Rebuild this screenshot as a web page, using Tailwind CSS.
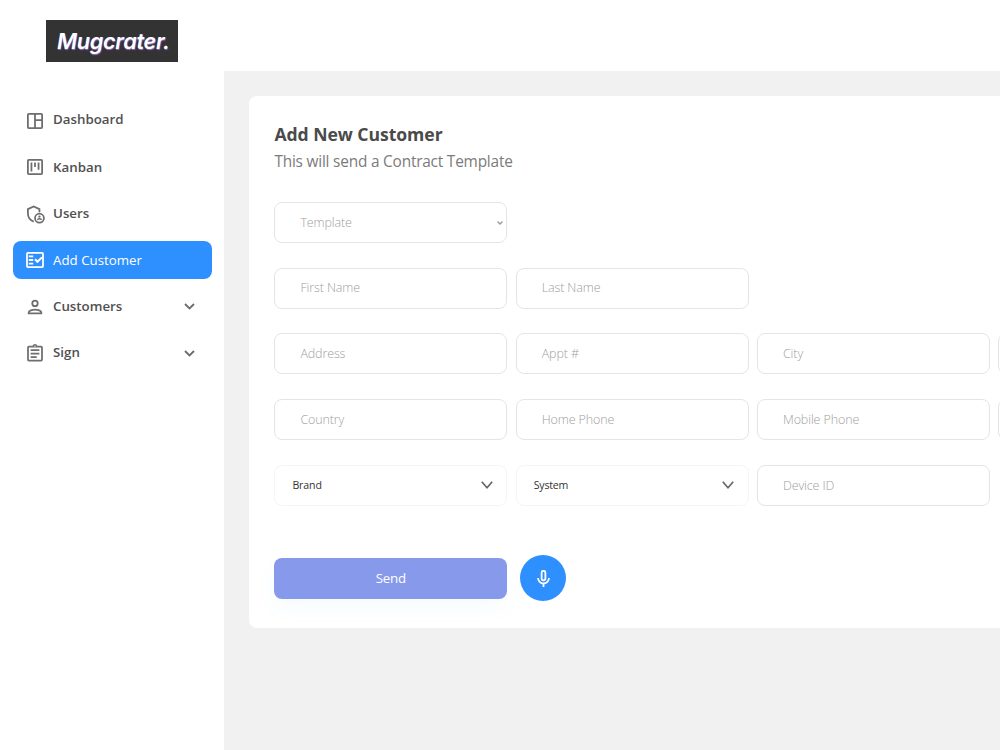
<!DOCTYPE html>
<html lang="en">
<head>
<meta charset="utf-8">
<title>Add Customer</title>
<script src="https://cdn.jsdelivr.net/npm/@tailwindcss/browser@4"></script>
</head>
<body class="w-[1000px] h-[750px] overflow-hidden bg-[#f1f1f1] font-['Open_Sans',sans-serif] text-[#505050]">
<div class="flex h-full overflow-hidden">
  <aside class="w-[224.4px] shrink-0 bg-white pl-[13px] pt-5">
    <div class="ml-[33px] flex h-[42px] w-[131.500px] items-center justify-center bg-[#333] pl-[3px] font-['Inter',sans-serif] text-[21.700px] font-semibold italic tracking-[-0.300px] text-white [font-feature-settings:'cv11'] [text-shadow:0.5px_1px_1px_#9b6cc9]"><span>Mugcrater.</span></div>
    <nav class="mt-[39.3px] flex w-[199.4px] flex-col gap-[9px] text-[13.300px] font-[580] leading-none">
      <a class="flex h-[37.6px] items-center pl-[14px]"><svg class="mt-[2px] size-[16px]" viewBox="3 3 18 18" fill="#6e6e6e"><path d="M19 3H5a2 2 0 0 0-2 2v14a2 2 0 0 0 2 2h14a2 2 0 0 0 2-2V5a2 2 0 0 0-2-2zM5 19V5h6v14H5zm14 0h-6v-7h6v7zm0-9h-6V5h6v5z"/></svg><span class="ml-[10px]">Dashboard</span></a>
      <a class="flex h-[37.6px] items-center pl-[14px]"><svg class="mt-px size-[16px]" viewBox="3 3 18 18" fill="#6e6e6e"><path d="M19 3H5a2 2 0 0 0-2 2v14a2 2 0 0 0 2 2h14a2 2 0 0 0 2-2V5a2 2 0 0 0-2-2zm0 16H5V5h14v14zM7 7h2v10H7zm4 0h2v5h-2zm4 0h2v8h-2z"/></svg><span class="ml-[10px] mt-[2px]">Kanban</span></a>
      <a class="flex h-[37.6px] items-center pl-[14px]"><svg class="mt-px size-[16px] overflow-visible" viewBox="3 3 18 18" fill="none" stroke="#6e6e6e" stroke-width="2"><path d="M10.500 20.500C6.500 19 4 15.500 4 11.200V6.500L10.500 3.500L17 6.500V10"/><circle cx="17" cy="16.700" r="5"/><circle cx="17" cy="15" r="1.300" fill="#6e6e6e" stroke="none"/><path d="M14.500 18.500c1.500-1.300 3.500-1.300 5 0" stroke-width="1.600"/></svg><span class="ml-[10px]">Users</span></a>
      <a class="flex h-[37.6px] items-center rounded-lg bg-[#2e90fe] pl-[13px] text-white"><svg class="mt-px h-[16px] w-[18px]" viewBox="2 3 20 18" fill="#fff"><path fill-rule="evenodd" d="M20 3H4a2 2 0 0 0-2 2v14a2 2 0 0 0 2 2h16a2 2 0 0 0 2-2V5a2 2 0 0 0-2-2zM4 5h16v14H4V5z"/><path d="M5 7h5v2H5zM5 11h5v2H5zM5 15h5v2H5z"/><path d="M12 11.200l2.800 2.800 5-5" fill="none" stroke="#fff" stroke-width="2.200"/></svg><span class="ml-[9px] mt-px font-medium">Add Customer</span></a>
      <a class="flex h-[37.6px] items-center pl-[13px]"><svg class="mt-px size-[18px]" viewBox="2 2 20 20" fill="none" stroke="#6e6e6e" stroke-width="2"><circle cx="12" cy="8" r="3"/><path d="M5 19v-1c0-2 4-3.100 7-3.100s7 1.100 7 3.100v1z"/></svg><span class="ml-[9px]">Customers</span><svg class="ml-auto mr-[17px] mt-px h-[7px] w-[11px]" viewBox="0 0 11 7" fill="none" stroke="#6e6e6e" stroke-width="1.900"><path d="M1 1l4.500 4.500L10 1"/></svg></a>
      <a class="flex h-[37.6px] items-center pl-[14px]"><svg class="h-[17.500px] w-[16px]" viewBox="3 1 18 20" fill="#6e6e6e"><path d="M19 3h-4.180a3 3 0 0 0-5.640 0H5a2 2 0 0 0-2 2v14a2 2 0 0 0 2 2h14a2 2 0 0 0 2-2V5a2 2 0 0 0-2-2zm-7-.250a.75.75 0 1 1 0 1.500.75.75 0 0 1 0-1.500zM19 19H5V5h14v14zM7 7h10v2H7zm0 4h10v2H7zm0 4h7v2H7z"/></svg><span class="-mt-px ml-[10px]">Sign</span><svg class="ml-auto mr-[17px] mt-px h-[7px] w-[11px]" viewBox="0 0 11 7" fill="none" stroke="#6e6e6e" stroke-width="1.900"><path d="M1 1l4.500 4.500L10 1"/></svg></a>
    </nav>
  </aside>
  <div class="min-w-0 flex-1 overflow-hidden">
    <header class="h-[71px] bg-white"></header>
    <main class="ml-[25px] mt-[25px] h-[532px] w-[1000px] rounded-lg bg-white pl-[25px] pt-[26px]">
      <h1 class="text-[17.600px] font-bold leading-6 tracking-[-0.05px] text-[#4a4a4a]">Add New Customer</h1>
      <p class="mt-[4px] text-[15.400px] leading-6 tracking-[-0.200px] text-[#7b7b7b]">This will send a Contract Template</p>
      <form class="mt-[28.300px] grid grid-cols-[repeat(4,233px)] auto-rows-[41px] gap-x-[8.300px] gap-y-[24.600px] text-[12.500px] font-light tracking-[-0.120px] text-[#a0a0a0]">
        <div class="flex items-center justify-between rounded-lg border border-[#e5e5e5] pl-[25px] pr-[3px]"><span class="mt-px">Template</span><svg class="h-1 w-[6px]" viewBox="0 0 6 4" fill="none" stroke="#999" stroke-width="1.300"><path d="M.5.5 3 3 5.500.5"/></svg></div>
        <div class="col-start-1 flex items-center rounded-lg border border-[#e5e5e5] pl-[25px]"><span>First Name</span></div>
        <div class="flex items-center rounded-lg border border-[#e5e5e5] pl-[25px]"><span>Last Name</span></div>
        <div class="col-start-1 flex items-center rounded-lg border border-[#e5e5e5] pl-[25px]"><span>Address</span></div>
        <div class="flex items-center rounded-lg border border-[#e5e5e5] pl-[25px]"><span>Appt #</span></div>
        <div class="flex items-center rounded-lg border border-[#e5e5e5] pl-[25px]"><span>City</span></div>
        <div class="rounded-lg border border-[#e5e5e5]"></div>
        <div class="flex items-center rounded-lg border border-[#e5e5e5] pl-[25px]"><span class="mt-px">Country</span></div>
        <div class="flex items-center rounded-lg border border-[#e5e5e5] pl-[25px]"><span class="mt-px">Home Phone</span></div>
        <div class="flex items-center rounded-lg border border-[#e5e5e5] pl-[25px]"><span class="mt-px">Mobile Phone</span></div>
        <div class="rounded-lg border border-[#e5e5e5]"></div>
        <div class="flex items-center justify-between rounded-lg border border-[#f5f5f5] pl-[17px] pr-[13px] text-[10.600px] font-normal text-[#333]"><span class="mt-[2px]">Brand</span><svg class="h-2 w-3" viewBox="0 0 12 8" fill="none" stroke="#666" stroke-width="1.700"><path d="M.8.8 6 6.700 11.200.8"/></svg></div>
        <div class="flex items-center justify-between rounded-lg border border-[#f5f5f5] pl-[17px] pr-[14px] text-[10.600px] font-normal tracking-[-0.2px] text-[#333]"><span class="mt-[2px]">System</span><svg class="h-2 w-3" viewBox="0 0 12 8" fill="none" stroke="#666" stroke-width="1.700"><path d="M.8.8 6 6.700 11.200.8"/></svg></div>
        <div class="flex items-center rounded-lg border border-[#e5e5e5] pl-[25px]"><span class="mt-[2px]">Device ID</span></div>
      </form>
      <div class="mt-[49.700px] flex items-center gap-[13px]">
        <button class="h-[41px] w-[233px] rounded-lg bg-[#8699eb] pt-px text-[13.300px] tracking-[-0.200px] text-white shadow-[0_10px_20px_rgba(46,144,254,0.04)]">Send</button>
        <button class="flex size-[45.500px] items-center justify-center rounded-full bg-[#2e90fe]"><svg class="h-[17px] w-[13px]" viewBox="5 2 14 19" fill="none" stroke="#fff" stroke-width="2"><rect x="9.900" y="2.900" width="4.200" height="10.600" rx="2.100"/><path d="M5.900 11a6.100 6.100 0 0 0 12.200 0M12 17.200V21"/></svg></button>
      </div>
    </main>
  </div>
</div>
</body>
</html>
